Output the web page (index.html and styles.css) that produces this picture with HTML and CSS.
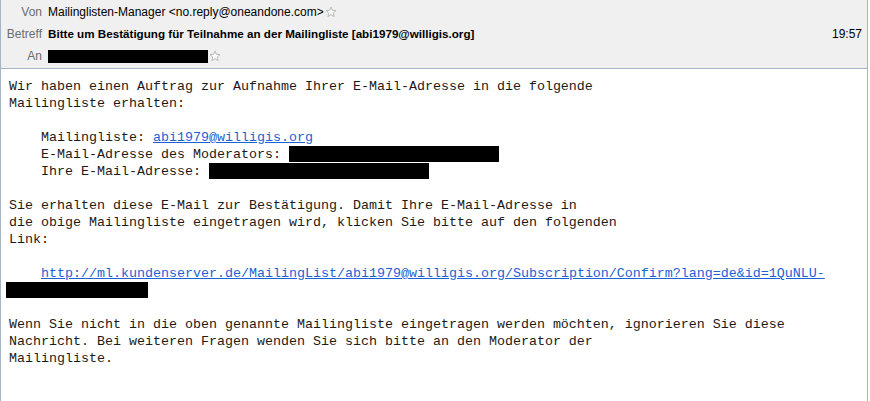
FILE: index.html
```html
<!DOCTYPE html>
<html lang="de">
<head>
    <meta charset="UTF-8">
    <title>Bitte um Bestätigung</title>
    <link rel="stylesheet" href="styles.css">
</head>
<body>
    <div class="message">
        <div class="header">
            <div class="row row-from">
                <span class="label">Von</span>
                <span class="value">Mailinglisten-Manager &lt;no.reply@oneandone.com&gt;</span>
                <svg class="star" viewBox="0 0 12 12"><path d="M6 1 L7.4 4.3 L11 4.6 L8.3 7 L9.1 10.6 L6 8.7 L2.9 10.6 L3.7 7 L1 4.6 L4.6 4.3 Z"/></svg>
            </div>
            <div class="row row-subject">
                <span class="label">Betreff</span>
                <span class="value subject">Bitte um Bestätigung für Teilnahme an der Mailingliste [abi1979@willigis.org]</span>
                <span class="time">19:57</span>
            </div>
            <div class="row row-to">
                <span class="label">An</span>
                <span class="redact redact-to"></span>
                <svg class="star" viewBox="0 0 12 12"><path d="M6 1 L7.4 4.3 L11 4.6 L8.3 7 L9.1 10.6 L6 8.7 L2.9 10.6 L3.7 7 L1 4.6 L4.6 4.3 Z"/></svg>
            </div>
        </div>
        <pre class="body">Wir haben einen Auftrag zur Aufnahme Ihrer E-Mail-Adresse in die folgende
Mailingliste erhalten:

    Mailingliste: <a href="#">abi1979@willigis.org</a>
    E-Mail-Adresse des Moderators: <span class="redact redact-mod"></span>
    Ihre E-Mail-Adresse: <span class="redact redact-own"></span>

Sie erhalten diese E-Mail zur Bestätigung. Damit Ihre E-Mail-Adresse in
die obige Mailingliste eingetragen wird, klicken Sie bitte auf den folgenden
Link:

    <a href="#">http://ml.kundenserver.de/MailingList/abi1979@willigis.org/Subscription/Confirm?lang=de&amp;id=1QuNLU-</a>
<span class="redact redact-link"></span>

Wenn Sie nicht in die oben genannte Mailingliste eingetragen werden möchten, ignorieren Sie diese
Nachricht. Bei weiteren Fragen wenden Sie sich bitte an den Moderator der
Mailingliste.</pre>
    </div>
</body>
</html>
```

FILE: styles.css
```css
body {
    margin: 0;
    background: #ffffff;
}
.message {
    width: 866px;
    height: 401px;
    border-left: 1px solid #a4b3c6;
    border-right: 1px solid #a4b3c6;
    overflow: hidden;
}
.header {
    background: #f0f0f0;
    border-bottom: 1px solid #a4b3c6;
    height: 68px;
    font-family: "Liberation Sans", Arial, sans-serif;
    font-size: 12px;
    color: #000;
}
.row {
    display: flex;
    align-items: center;
    padding-right: 5px;
}
.row-from {
    height: 23px;
}
.row-subject {
    height: 21px;
}
.row-to {
    height: 24px;
}
.label {
    width: 41px;
    text-align: right;
    color: #6d6d6d;
    margin-right: 6px;
}
.subject {
    font-weight: bold;
    font-size: 11.65px;
}
.time {
    margin-left: auto;
}
.star {
    width: 12px;
    height: 12px;
    margin-left: 1px;
    fill: #fbfbfb;
    stroke: #b9b9b9;
    stroke-width: 1;
    stroke-linejoin: round;
}
.redact {
    display: inline-block;
    background: #000;
    vertical-align: middle;
}
.redact-to {
    width: 160px;
    height: 13px;
}
.body {
    margin: 0;
    padding: 9px 8px;
    font-family: "Liberation Mono", "Courier New", monospace;
    font-size: 13.33px;
    line-height: 17px;
    color: #1a1a1a;
}
.body a {
    color: #1a62d6;
}
.redact-mod {
    width: 210px;
    height: 16px;
}
.redact-own {
    width: 220px;
    height: 16px;
}
.redact-link {
    width: 142px;
    height: 16px;
    margin-left: -3px;
}
```
